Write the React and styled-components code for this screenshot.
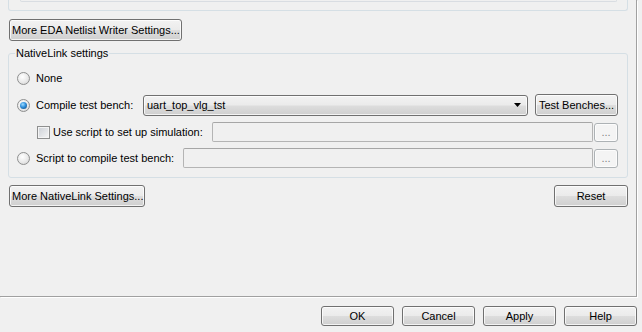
import React from "react";
import styled, { createGlobalStyle, css } from "styled-components";

const GlobalStyle = createGlobalStyle`
  html, body {
    margin: 0;
    padding: 0;
    background: #f0f0f0;
  }
  body {
    font-family: "Liberation Sans", Arial, sans-serif;
    font-size: 11px;
    color: #000;
  }
`;

const Window = styled.div`
  width: 642px;
  height: 332px;
  overflow: hidden;
  background: #f0f0f0;
`;

const Page = styled.div`
  box-sizing: border-box;
  width: 637px;
  height: 297px;
  padding: 0 8px;
  border-right: 1px solid #a0a0a0;
  border-bottom: 1px solid #a0a0a0;
  box-shadow: 1px 1px 0 #fff;
`;

const TopGroup = styled.div`
  height: 10px;
  padding: 0 10px 0 11px;
  border: 1px solid #d5dfe5;
  border-top: none;
  border-radius: 0 0 3px 3px;
`;

const TopGroupInner = styled.div`
  height: 1px;
  border: 1px solid #d9dde2;
  border-top: none;
  border-radius: 0 0 2px 2px;
`;

const Button = styled.button`
  box-sizing: border-box;
  width: ${(p) => p.$w}px;
  height: ${(p) => p.$h || 22}px;
  margin: 0;
  padding: 0 2px;
  flex: none;
  font: inherit;
  color: #000;
  white-space: nowrap;
  border: 1px solid #707070;
  border-radius: 3px;
  background: linear-gradient(#f2f2f2 0%, #ebebeb 48%, #dddddd 52%, #cfcfcf 100%);
  box-shadow: inset 0 0 0 1px rgba(255, 255, 255, 0.75);
  &:disabled {
    border-color: #adb2b5;
    background: #f4f4f4;
    color: #838383;
    box-shadow: inset 0 0 0 1px #fcfcfc;
  }
`;

const TopButton = styled(Button)`
  margin: 8px 0 0 1px;
  display: block;
`;

const Group = styled.fieldset`
  margin: 5px 0 0;
  padding: 8px 9px 9px 8px;
  min-width: 0;
  border: 1px solid #d5dfe5;
  border-radius: 3px;
  display: flex;
  flex-direction: column;
  gap: 6px;
`;

const Legend = styled.legend`
  margin-left: -2px;
  padding: 0 1px;
  line-height: 14px;
`;

const Row = styled.div`
  display: flex;
  align-items: center;
  height: ${(p) => p.$h || 20}px;
  padding-left: ${(p) => p.$indent || 0}px;
`;

const Radio = styled.span`
  box-sizing: border-box;
  position: relative;
  flex: none;
  width: 13px;
  height: 13px;
  margin-right: 6px;
  border-radius: 50%;
  border: 1px solid #8e8f8f;
  background: radial-gradient(circle at 40% 35%, #ffffff 0%, #e9e9e9 55%, #cdcdcd 100%);
  ${(p) =>
    p.$checked &&
    css`
      &::after {
        content: "";
        position: absolute;
        inset: 2px;
        border-radius: 50%;
        background: radial-gradient(circle at 40% 35%, #9fdcff 0%, #2f8fdc 45%, #0d3f70 100%);
      }
    `}
`;

const Check = styled.span`
  box-sizing: border-box;
  flex: none;
  width: 13px;
  height: 13px;
  margin-right: 3px;
  border: 1px solid #8e8f8f;
  background: linear-gradient(135deg, #cbcfd5 0%, #f6f6f6 100%);
  box-shadow: inset 0 0 0 1px #f4f4f4;
`;

const Label = styled.span`
  flex: none;
  width: ${(p) => (p.$w ? `${p.$w}px` : "auto")};
  white-space: nowrap;
`;

const Combo = styled.div`
  box-sizing: border-box;
  flex: 1;
  height: 21px;
  margin-right: 7px;
  padding: 0 6px 0 3px;
  display: flex;
  align-items: center;
  justify-content: space-between;
  border: 1px solid #707070;
  border-radius: 3px;
  background: linear-gradient(#f2f2f2 0%, #ebebeb 48%, #dddddd 52%, #cfcfcf 100%);
  box-shadow: inset 0 0 0 1px rgba(255, 255, 255, 0.75);
`;

const TextField = styled.div`
  box-sizing: border-box;
  flex: 1;
  height: 20px;
  margin-right: 1px;
  border: 1px solid #b4b4b4;
  border-top-color: #a6a6a6;
  border-radius: 2px;
  background: #f0f0f0;
`;

const BottomRow = styled.div`
  display: flex;
  justify-content: space-between;
  margin-top: 7px;
  padding-left: 1px;
`;

const Footer = styled.div`
  display: flex;
  justify-content: flex-end;
  gap: 8px;
  padding: 9px 5px 0 0;
`;

const Arrow = () => (
  <svg width="7" height="4" viewBox="0 0 7 4">
    <path d="M0 0h7L3.5 4z" fill="#000" />
  </svg>
);

export default function App() {
  return (
    <Window>
      <GlobalStyle />
      <Page>
        <TopGroup>
          <TopGroupInner />
        </TopGroup>
        <TopButton $w={173}>More EDA Netlist Writer Settings...</TopButton>

        <Group>
          <Legend>NativeLink settings</Legend>
          <Row>
            <Radio />
            <Label>None</Label>
          </Row>
          <Row $h={22}>
            <Radio $checked />
            <Label $w={107}>Compile test bench:</Label>
            <Combo>
              <span>uart_top_vlg_tst</span>
              <Arrow />
            </Combo>
            <Button $w={83}>Test Benches...</Button>
          </Row>
          <Row $indent={20}>
            <Check />
            <Label $w={159}>Use script to set up simulation:</Label>
            <TextField />
            <Button $w={24} $h={19} disabled>
              ...
            </Button>
          </Row>
          <Row>
            <Radio />
            <Label $w={147}>Script to compile test bench:</Label>
            <TextField />
            <Button $w={24} $h={19} disabled>
              ...
            </Button>
          </Row>
        </Group>

        <BottomRow>
          <Button $w={136}>More NativeLink Settings...</Button>
          <Button $w={74}>Reset</Button>
        </BottomRow>
      </Page>

      <Footer>
        <Button $w={73} $h={20}>OK</Button>
        <Button $w={73} $h={20}>Cancel</Button>
        <Button $w={73} $h={20}>Apply</Button>
        <Button $w={73} $h={20}>Help</Button>
      </Footer>
    </Window>
  );
}
